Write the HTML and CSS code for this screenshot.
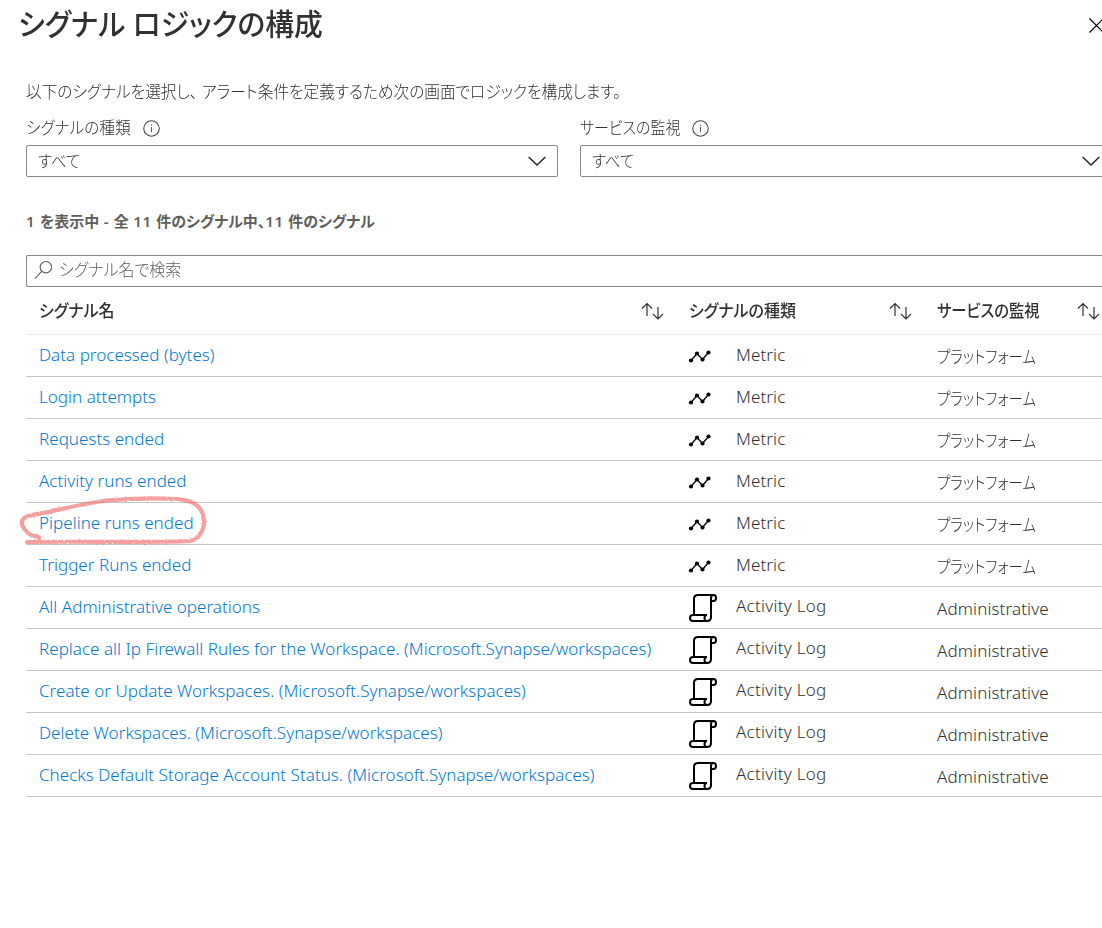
FILE: index.html
```html
<!DOCTYPE html>
<html lang="ja">
<head>
<meta charset="utf-8">
<title>シグナル ロジックの構成</title>
<link rel="stylesheet" href="styles.css">
</head>
<body>
<svg class="defs" width="0" height="0" aria-hidden="true">
  <symbol id="i-sort" viewBox="0 0 24 18"><path d="M7 14V2M2 6.500L7 1.500l5 5M18 5v12M13 12l5 5 5-5" fill="none" stroke="#323130" stroke-width="1.200"/></symbol>
  <symbol id="i-info" viewBox="0 0 16 16"><circle cx="8" cy="8" r="7.300" fill="none" stroke="#484644" stroke-width="1"/><path d="M8 6.500v5M8 4.200v1.300" stroke="#605e5c" stroke-width="1"/></symbol>
  <symbol id="i-chev" viewBox="0 0 20 12"><path d="M1.700 2l8.300 8 8.300-8" fill="none" stroke="#201f1e" stroke-width="1.400"/></symbol>
  <symbol id="i-metric" viewBox="0 0 24 14"><path d="M3 11.500L9 4.500l5.500 6L20.500 3.500" fill="none" stroke="#000" stroke-width="1.300"/><g fill="#000"><circle cx="3" cy="11.500" r="2.100"/><circle cx="9" cy="4.500" r="2.100"/><circle cx="14.500" cy="10.500" r="2.100"/><circle cx="20.500" cy="3.500" r="2.100"/></g></symbol>
  <symbol id="i-log" viewBox="0 0 28 28"><path d="M5 20.500V5q0-4 4-4h14.500M22 20.500V4q0-3 2.500-3T27 4t-2.500 3H22M18 21H4Q1 21 1 24t3 3h14q4 0 4-4v-3M18 21q-2.500 0-2.500 3t2.500 3" fill="none" stroke="#000" stroke-width="2"/></symbol>
  <filter id="crayon" x="-5%" y="-10%" width="110%" height="120%"><feTurbulence type="fractalNoise" baseFrequency=".7" numOctaves="2" seed="4" result="n"/><feDisplacementMap in="SourceGraphic" in2="n" scale="2.500" result="d"/><feGaussianBlur in="d" stdDeviation=".3"/></filter>
</svg>
<div class="panel">
  <header class="top">
    <h1 class="title fit">シグナル ロジックの構成</h1>
    <svg class="close" viewBox="0 0 16 16"><path d="M.5.500l15 15M15.500.500l-15 15" stroke="#000" stroke-width="1.300"/></svg>
  </header>
  <main class="content">
    <p class="intro fit">以下のシグナルを選択し<span class="comma">、</span>アラート条件を定義するため次の画面でロジックを構成します。</p>
    <div class="filters">
      <div class="field">
        <div class="label"><span class="type-label fit">シグナルの種類</span><svg class="info"><use href="#i-info"/></svg></div>
        <div class="select"><span class="value fit">すべて</span><svg class="chev"><use href="#i-chev"/></svg></div>
      </div>
      <div class="field">
        <div class="label"><span class="service-label fit">サービスの監視</span><svg class="info"><use href="#i-info"/></svg></div>
        <div class="select"><span class="value fit">すべて</span><svg class="chev"><use href="#i-chev"/></svg></div>
      </div>
    </div>
    <p class="count"><span class="num">1 </span>を表示中<span class="num"> - </span>全<span class="num"> 11 </span>件のシグナル中、<span class="num">11 </span>件のシグナル</p>
    <div class="search"><svg class="glass" viewBox="0 0 20 20"><circle cx="12.500" cy="7" r="6" fill="none" stroke="#605e5c" stroke-width="1.200"/><path d="M8.300 11.200L1 19" stroke="#605e5c" stroke-width="1.200"/></svg><span class="hint fit">シグナル名で検索</span></div>
    <div class="table">
      <div class="row head">
        <div class="cell"><span class="head-name fit">シグナル名</span><svg class="sort"><use href="#i-sort"/></svg></div>
        <div class="cell"><span class="head-type fit">シグナルの種類</span><svg class="sort"><use href="#i-sort"/></svg></div>
        <div class="cell"><span class="head-service fit">サービスの監視</span><svg class="sort"><use href="#i-sort"/></svg></div>
      </div>
      <div class="row"><a class="cell link">Data processed (bytes)</a><div class="cell"><svg class="metric"><use href="#i-metric"/></svg><span class="kind">Metric</span></div><div class="cell"><span class="kana fit">プラットフォーム</span></div></div>
      <div class="row"><a class="cell link">Login attempts</a><div class="cell"><svg class="metric"><use href="#i-metric"/></svg><span class="kind">Metric</span></div><div class="cell"><span class="kana fit">プラットフォーム</span></div></div>
      <div class="row"><a class="cell link">Requests ended</a><div class="cell"><svg class="metric"><use href="#i-metric"/></svg><span class="kind">Metric</span></div><div class="cell"><span class="kana fit">プラットフォーム</span></div></div>
      <div class="row"><a class="cell link">Activity runs ended</a><div class="cell"><svg class="metric"><use href="#i-metric"/></svg><span class="kind">Metric</span></div><div class="cell"><span class="kana fit">プラットフォーム</span></div></div>
      <div class="row"><a class="cell link">Pipeline runs ended</a><div class="cell"><svg class="metric"><use href="#i-metric"/></svg><span class="kind">Metric</span></div><div class="cell"><span class="kana fit">プラットフォーム</span></div>
        <svg class="scribble" viewBox="0 0 200 56"><path d="M21 42C19 38 17 42 13 39C8 36 3 30 4 26C4 20 14 19 25 17C45 13 75 5 95 4C118 2 140 2 160 3C178 5 185 12 186 25C186 36 180 43 172 45C130 47 60 45 9 46" fill="none" stroke="#f06e6e" stroke-opacity=".66" stroke-width="4.200" stroke-linecap="round" stroke-linejoin="round" filter="url(#crayon)"/></svg>
      </div>
      <div class="row"><a class="cell link">Trigger Runs ended</a><div class="cell"><svg class="metric"><use href="#i-metric"/></svg><span class="kind">Metric</span></div><div class="cell"><span class="kana fit">プラットフォーム</span></div></div>
      <div class="row"><a class="cell link">All Administrative operations</a><div class="cell"><svg class="log"><use href="#i-log"/></svg><span class="kind act">Activity Log</span></div><div class="cell adm">Administrative</div></div>
      <div class="row"><a class="cell link">Replace all Ip Firewall Rules for the Workspace. (Microsoft.Synapse/workspaces)</a><div class="cell"><svg class="log"><use href="#i-log"/></svg><span class="kind act">Activity Log</span></div><div class="cell adm">Administrative</div></div>
      <div class="row"><a class="cell link">Create or Update Workspaces. (Microsoft.Synapse/workspaces)</a><div class="cell"><svg class="log"><use href="#i-log"/></svg><span class="kind act">Activity Log</span></div><div class="cell adm">Administrative</div></div>
      <div class="row"><a class="cell link">Delete Workspaces. (Microsoft.Synapse/workspaces)</a><div class="cell"><svg class="log"><use href="#i-log"/></svg><span class="kind act">Activity Log</span></div><div class="cell adm">Administrative</div></div>
      <div class="row"><a class="cell link">Checks Default Storage Account Status. (Microsoft.Synapse/workspaces)</a><div class="cell"><svg class="log"><use href="#i-log"/></svg><span class="kind act">Activity Log</span></div><div class="cell adm">Administrative</div></div>
    </div>
  </main>
</div>
</body>
</html>
```
FILE: styles.css
```css
* { box-sizing: border-box; }
body { margin: 0; background: #fff; color: #323130; overflow: hidden; font: 300 17px/24px "Noto Sans", "Noto Sans CJK JP", sans-serif; font-feature-settings: "palt"; }
svg { display: block; flex: none; }
.defs { position: absolute; }
.fit { transform-origin: left center; white-space: nowrap; }
.panel { width: 1112px; height: 928px; }
.top { display: flex; justify-content: space-between; padding: 4px 8px 0 18px; height: 78px; }
.title { margin: 0; font-size: 30px; line-height: 40px; font-weight: 500; transform: scaleX(.96); }
.close { width: 15px; height: 15px; margin-top: 14px; }
.content { padding-left: 26px; white-space: nowrap; }
.intro { margin: 0; height: 38px; line-height: 27px; transform: scaleX(.921); }
.comma { margin-right: 5px; }
.filters { display: grid; grid-template-columns: 532px 532px; gap: 22px; }
.label { display: flex; align-items: center; height: 29px; padding-bottom: 5px; }
.type-label { width: 117px; transform: scaleX(.92); }
.service-label { width: 112px; transform: scaleX(.88); }
.info { width: 17px; height: 17px; }
.select { display: flex; align-items: center; justify-content: space-between; height: 32px; border: 1px solid #8a8886; border-radius: 2px; padding: 0 10px 0 11px; font-size: 16px; }
.value { transform: scaleX(.96); }
.chev { width: 20px; height: 12px; }
.count { margin: 32px 0 0; height: 46px; font-size: 15px; font-weight: 600; color: #605e5c; }
.num { letter-spacing: .65px; }
.search { display: flex; align-items: center; gap: 6px; height: 32px; border: 1px solid #8a8886; border-right: 0; border-radius: 2px; padding: 0 7px 2px; color: #605e5c; }
.hint { transform: scaleX(.94); }
.glass { width: 19px; height: 20px; }
.row { display: grid; grid-template-columns: 650px 248px 188px; height: 42px; border-bottom: 1px solid #c8c6c4; position: relative; }
.head { height: 48px; border-color: #edebe9; font-weight: 500; }
.head-name, .head-type { transform: scaleX(.94); }
.head-service { transform: scaleX(.9); }
.cell { display: flex; align-items: center; padding: 0 12px 0 13px; }
.head .cell { justify-content: space-between; }
.sort { width: 24px; height: 18px; margin-top: 1px; }
.link { color: #0078d4; padding-bottom: 2px; letter-spacing: .03px; }
.metric { width: 24px; height: 14px; margin: 0 24px 0 -1px; }
.kind { padding-bottom: 2px; letter-spacing: .1px; }
.log { width: 28px; height: 28px; margin-right: 19px; }
.act { padding-bottom: 3px; letter-spacing: .27px; }
.kana { padding-top: 2px; transform: scaleX(.85); }
.adm { padding-top: 2px; letter-spacing: .12px; }
.scribble { position: absolute; left: -8px; top: -7px; width: 200px; height: 56px; }
```
